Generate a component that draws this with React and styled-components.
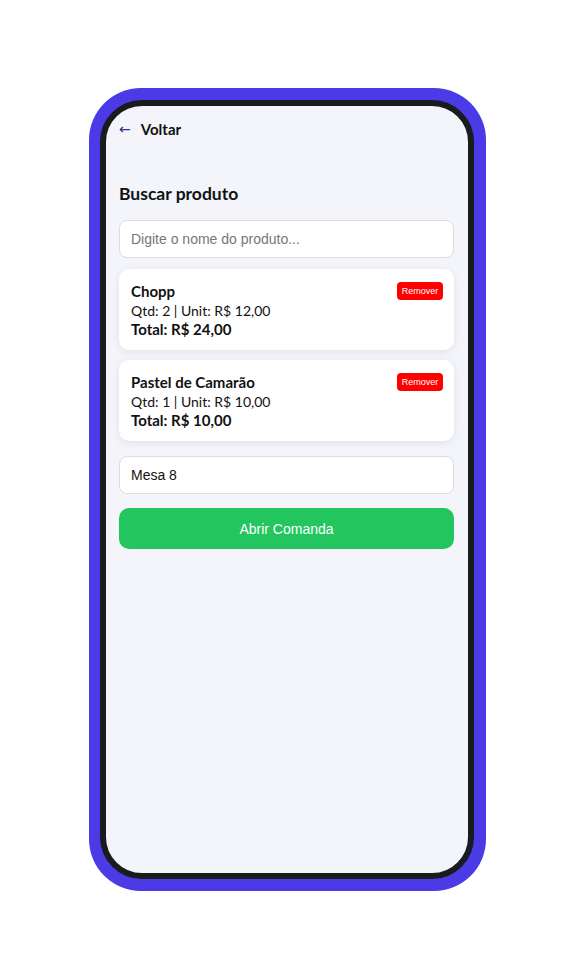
import React from "react";
import styled, { createGlobalStyle } from "styled-components";

const Global = createGlobalStyle`
  html, body { margin: 0; padding: 0; background: #ffffff; }
  body { font-family: "Lato", "Noto Sans", sans-serif; }
  * { box-sizing: border-box; }
`;

const Page = styled.div`
  width: 567px;
  height: 980px;
  padding: 88px 0 0 89px;
`;

const Frame = styled.div`
  width: 397px;
  height: 803px;
  padding: 12px 12px 12px 11px;
  background: #4b3be6;
  border-radius: 52px;
`;

const Bezel = styled.div`
  width: 100%;
  height: 100%;
  border: 6px solid #1a1b1c;
  border-radius: 42px;
  background: #f3f5fa;
  overflow: hidden;
`;

const Screen = styled.div`
  padding: 14px 14px 0 13px;
  display: flex;
  flex-direction: column;
`;

const BackRow = styled.div`
  display: flex;
  align-items: center;
  gap: 10px;
  height: 18px;
  font-size: 15px;
  font-weight: 700;
  color: #111;
`;

const Arrow = styled.span`
  color: #3a2a8c;
  font-family: "DejaVu Sans", sans-serif;
  font-weight: 400;
  font-size: 14px;
`;

const Title = styled.h2`
  margin: 45px 0 15px;
  font-size: 17.5px;
  font-weight: 700;
  color: #111;
  line-height: 22px;
`;

const Field = styled.input`
  width: 100%;
  height: 38px;
  border: 1px solid #dcdde2;
  border-radius: 8px;
  background: #fff;
  padding: 0 11px;
  font-family: "Liberation Sans", Arial, sans-serif;
  font-size: 14px;
  color: #111;
  outline: none;
  &::placeholder { color: #777; }
`;

const List = styled.div`
  display: flex;
  flex-direction: column;
  gap: 10px;
  margin: 11px 0 15px;
`;

const Card = styled.div`
  position: relative;
  background: #fff;
  border-radius: 10px;
  padding: 13px 12px 10px;
  box-shadow: 0 2px 8px rgba(0, 0, 0, 0.08);
  height: 81px;
`;

const Name = styled.div`
  font-size: 15px;
  font-weight: 700;
  line-height: 19px;
  color: #111;
`;

const Line = styled.div`
  font-size: ${(p) => (p.$bold ? 15 : 14)}px;
  line-height: 19px;
  color: #111;
  font-weight: ${(p) => (p.$bold ? 700 : 400)};
`;

const Remove = styled.button`
  position: absolute;
  top: 13px;
  right: 11px;
  width: 46px;
  height: 18px;
  padding: 0;
  border: none;
  border-radius: 4px;
  background: #ff0000;
  color: #fff;
  font-family: "Liberation Sans", Arial, sans-serif;
  font-size: 9px;
`;

const Primary = styled.button`
  margin-top: 14px;
  width: 100%;
  height: 41px;
  border: none;
  border-radius: 10px;
  background: #22c55e;
  color: #fff;
  font-family: "Liberation Sans", Arial, sans-serif;
  font-size: 14px;
`;

const items = [
  { name: "Chopp", qtd: 2, unit: "12,00", total: "24,00" },
  { name: "Pastel de Camarão", qtd: 1, unit: "10,00", total: "10,00" },
];

export default function App() {
  return (
    <>
      <Global />
      <Page>
        <Frame>
          <Bezel>
            <Screen>
              <BackRow>
                <Arrow>←</Arrow>
                <span>Voltar</span>
              </BackRow>
              <Title>Buscar produto</Title>
              <Field placeholder="Digite o nome do produto..." />
              <List>
                {items.map((it) => (
                  <Card key={it.name}>
                    <Name>{it.name}</Name>
                    <Line>
                      Qtd: {it.qtd} | Unit: R$ {it.unit}
                    </Line>
                    <Line $bold>Total: R$ {it.total}</Line>
                    <Remove>Remover</Remove>
                  </Card>
                ))}
              </List>
              <Field defaultValue="Mesa 8" />
              <Primary>Abrir Comanda</Primary>
            </Screen>
          </Bezel>
        </Frame>
      </Page>
    </>
  );
}
